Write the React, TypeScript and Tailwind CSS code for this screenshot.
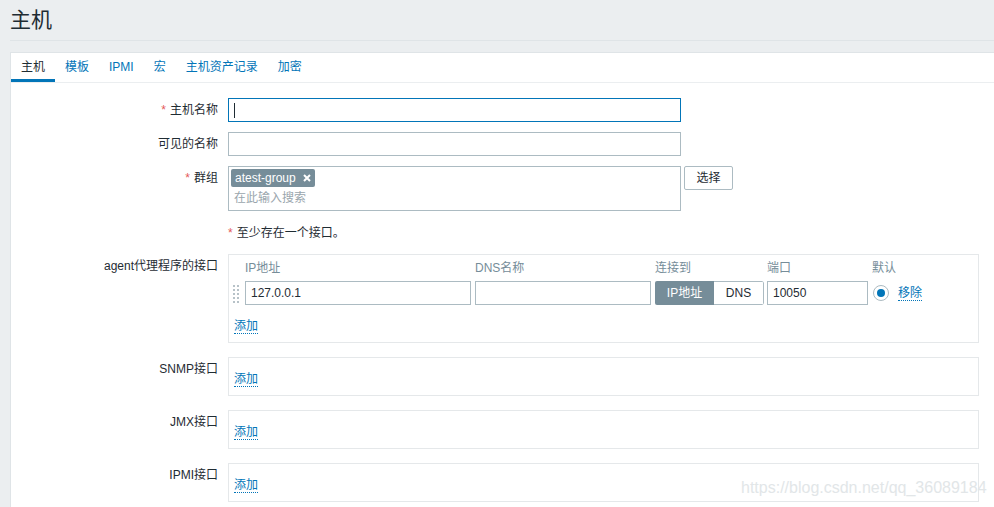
import React from "react"

const font = { fontFamily: '"Liberation Sans", Arial, "Noto Sans CJK SC", sans-serif' }

function Req() {
  return <span className="text-[#e45959] mr-[4px]">*</span>
}

function AddLink() {
  return (
    <span className="text-[#0275b8] border-b border-dotted border-[#0275b8] leading-[14px]">添加</span>
  )
}

function Row({ label, children, req }: { label?: string; children: React.ReactNode; req?: boolean }) {
  return (
    <div className="flex items-start">
      <div className="w-[207px] text-right pt-[5px] leading-[14px] shrink-0">
        {req && <Req />}
        {label}
      </div>
      <div className="ml-[10px] flex items-start">{children}</div>
    </div>
  )
}

function DragHandle() {
  return (
    <svg width="6" height="20" viewBox="0 0 6 20" className="block">
      {[0, 4, 8, 12, 16].map((y) => (
        <g key={y} fill="#b7c2c8">
          <rect x="0" y={y + 1} width="2" height="2" />
          <rect x="4" y={y + 1} width="2" height="2" />
        </g>
      ))}
    </svg>
  )
}

function EmptyIface() {
  return (
    <div className="w-[751px] h-[39px] border border-[#e5e8ea] pl-[5px] pt-[12px]">
      <AddLink />
    </div>
  )
}

export default function App() {
  const tabs = ["主机", "模板", "IPMI", "宏", "主机资产记录", "加密"]
  return (
    <div className="bg-[#ebeef0] min-h-[507px] w-[994px] overflow-hidden text-[12px] text-[#1f2c33] relative" style={font}>
      <div className="ml-[10px] h-[41px] border-b border-[#dfe4e7] text-[21px] leading-[21px] pt-[9px]">主机</div>
      <div className="ml-[10px] mt-[11px] bg-white border-l border-t border-[#dfe4e7] w-[1000px] h-[460px]">
        {/* tabs */}
        <div className="flex h-[30px] border-b border-[#ebeef0]">
          {tabs.map((t, i) => (
            <div
              key={t}
              className={
                i === 0
                  ? "px-[10px] pt-[7px] leading-[14px] border-b-[3px] border-[#0275b8] text-[#1f2c33]"
                  : "px-[10px] pt-[7px] leading-[14px] text-[#0275b8]"
              }
            >
              {t}
            </div>
          ))}
        </div>

        <div className="pt-[15px] flex flex-col gap-[10px]">
          <Row label="主机名称" req>
            <div className="w-[453px] h-[24px] border border-[#0275b8] relative">
              <div className="absolute left-[5px] top-[4px] w-[1px] h-[15px] bg-[#1f2c33]" />
            </div>
          </Row>
          <Row label="可见的名称">
            <div className="w-[453px] h-[24px] border border-[#acbbc2]" />
          </Row>
          <Row label="群组" req>
            <div className="w-[453px] h-[45px] border border-[#acbbc2] pl-[2px] pt-[2px]">
              <div className="inline-flex items-center h-[18px] bg-[#768d99] text-white rounded-[2px] pl-[4px] pr-[4px] gap-[7px]">
                <span className="leading-[14px]">atest-group</span>
                <svg width="8" height="8" viewBox="0 0 8 8">
                  <path d="M1 1 L7 7 M7 1 L1 7" stroke="white" strokeWidth="2" />
                </svg>
              </div>
              <div className="pl-[3px] pt-[4px] leading-[14px] text-[#9aa6ad]">在此输入搜索</div>
            </div>
            <div className="ml-[3px] w-[49px] h-[24px] border border-[#acbbc2] rounded-[2px] flex items-center justify-center">选择</div>
          </Row>
          <Row>
            <div className="h-[23px] pt-[5px] leading-[14px]">
              <Req />至少存在一个接口。
            </div>
          </Row>
          <div className="flex flex-col gap-[14px]">
            <Row label="agent代理程序的接口">
              <div className="w-[751px] h-[89px] border border-[#e5e8ea] pl-[4px]">
                <div className="flex h-[26px] pt-[6px] leading-[14px] text-[#768d99]">
                  <div className="w-[12px]" />
                  <div className="w-[230px]">IP地址</div>
                  <div className="w-[180px]">DNS名称</div>
                  <div className="w-[112px]">连接到</div>
                  <div className="w-[105px]">端口</div>
                  <div>默认</div>
                </div>
                <div className="flex items-center h-[24px]">
                  <div className="w-[12px] pt-[1px]">
                    <DragHandle />
                  </div>
                  <div className="w-[226px] h-[24px] border border-[#acbbc2] px-[5px] leading-[22px]">127.0.0.1</div>
                  <div className="ml-[4px] w-[176px] h-[24px] border border-[#acbbc2]" />
                  <div className="ml-[4px] w-[109px] h-[24px] flex rounded-[2px] overflow-hidden">
                    <div className="w-[59px] bg-[#768d99] text-white flex items-center justify-center">IP地址</div>
                    <div className="flex-1 border border-l-0 border-[#acbbc2] rounded-r-[2px] flex items-center justify-center">DNS</div>
                  </div>
                  <div className="ml-[3px] w-[101px] h-[24px] border border-[#acbbc2] px-[5px] leading-[22px]">10050</div>
                  <div className="ml-[5px] w-[16px] h-[16px] rounded-full border border-[#acbbc2] flex items-center justify-center">
                    <div className="w-[8px] h-[8px] rounded-full bg-[#0275b8]" />
                  </div>
                  <div className="ml-[9px]">
                    <span className="text-[#0275b8] border-b border-dotted border-[#0275b8] leading-[14px]">移除</span>
                  </div>
                </div>
                <div className="pt-[12px] pl-[1px]">
                  <AddLink />
                </div>
              </div>
            </Row>
            <Row label="SNMP接口">
              <EmptyIface />
            </Row>
            <Row label="JMX接口">
              <EmptyIface />
            </Row>
            <Row label="IPMI接口">
              <EmptyIface />
            </Row>
          </div>
        </div>
      </div>
      <div className="absolute left-[741px] top-[478px] text-[16px] leading-[20px] text-[#e2e6e8] pointer-events-none">
        https://blog.csdn.net/qq_36089184
      </div>
    </div>
  )
}
